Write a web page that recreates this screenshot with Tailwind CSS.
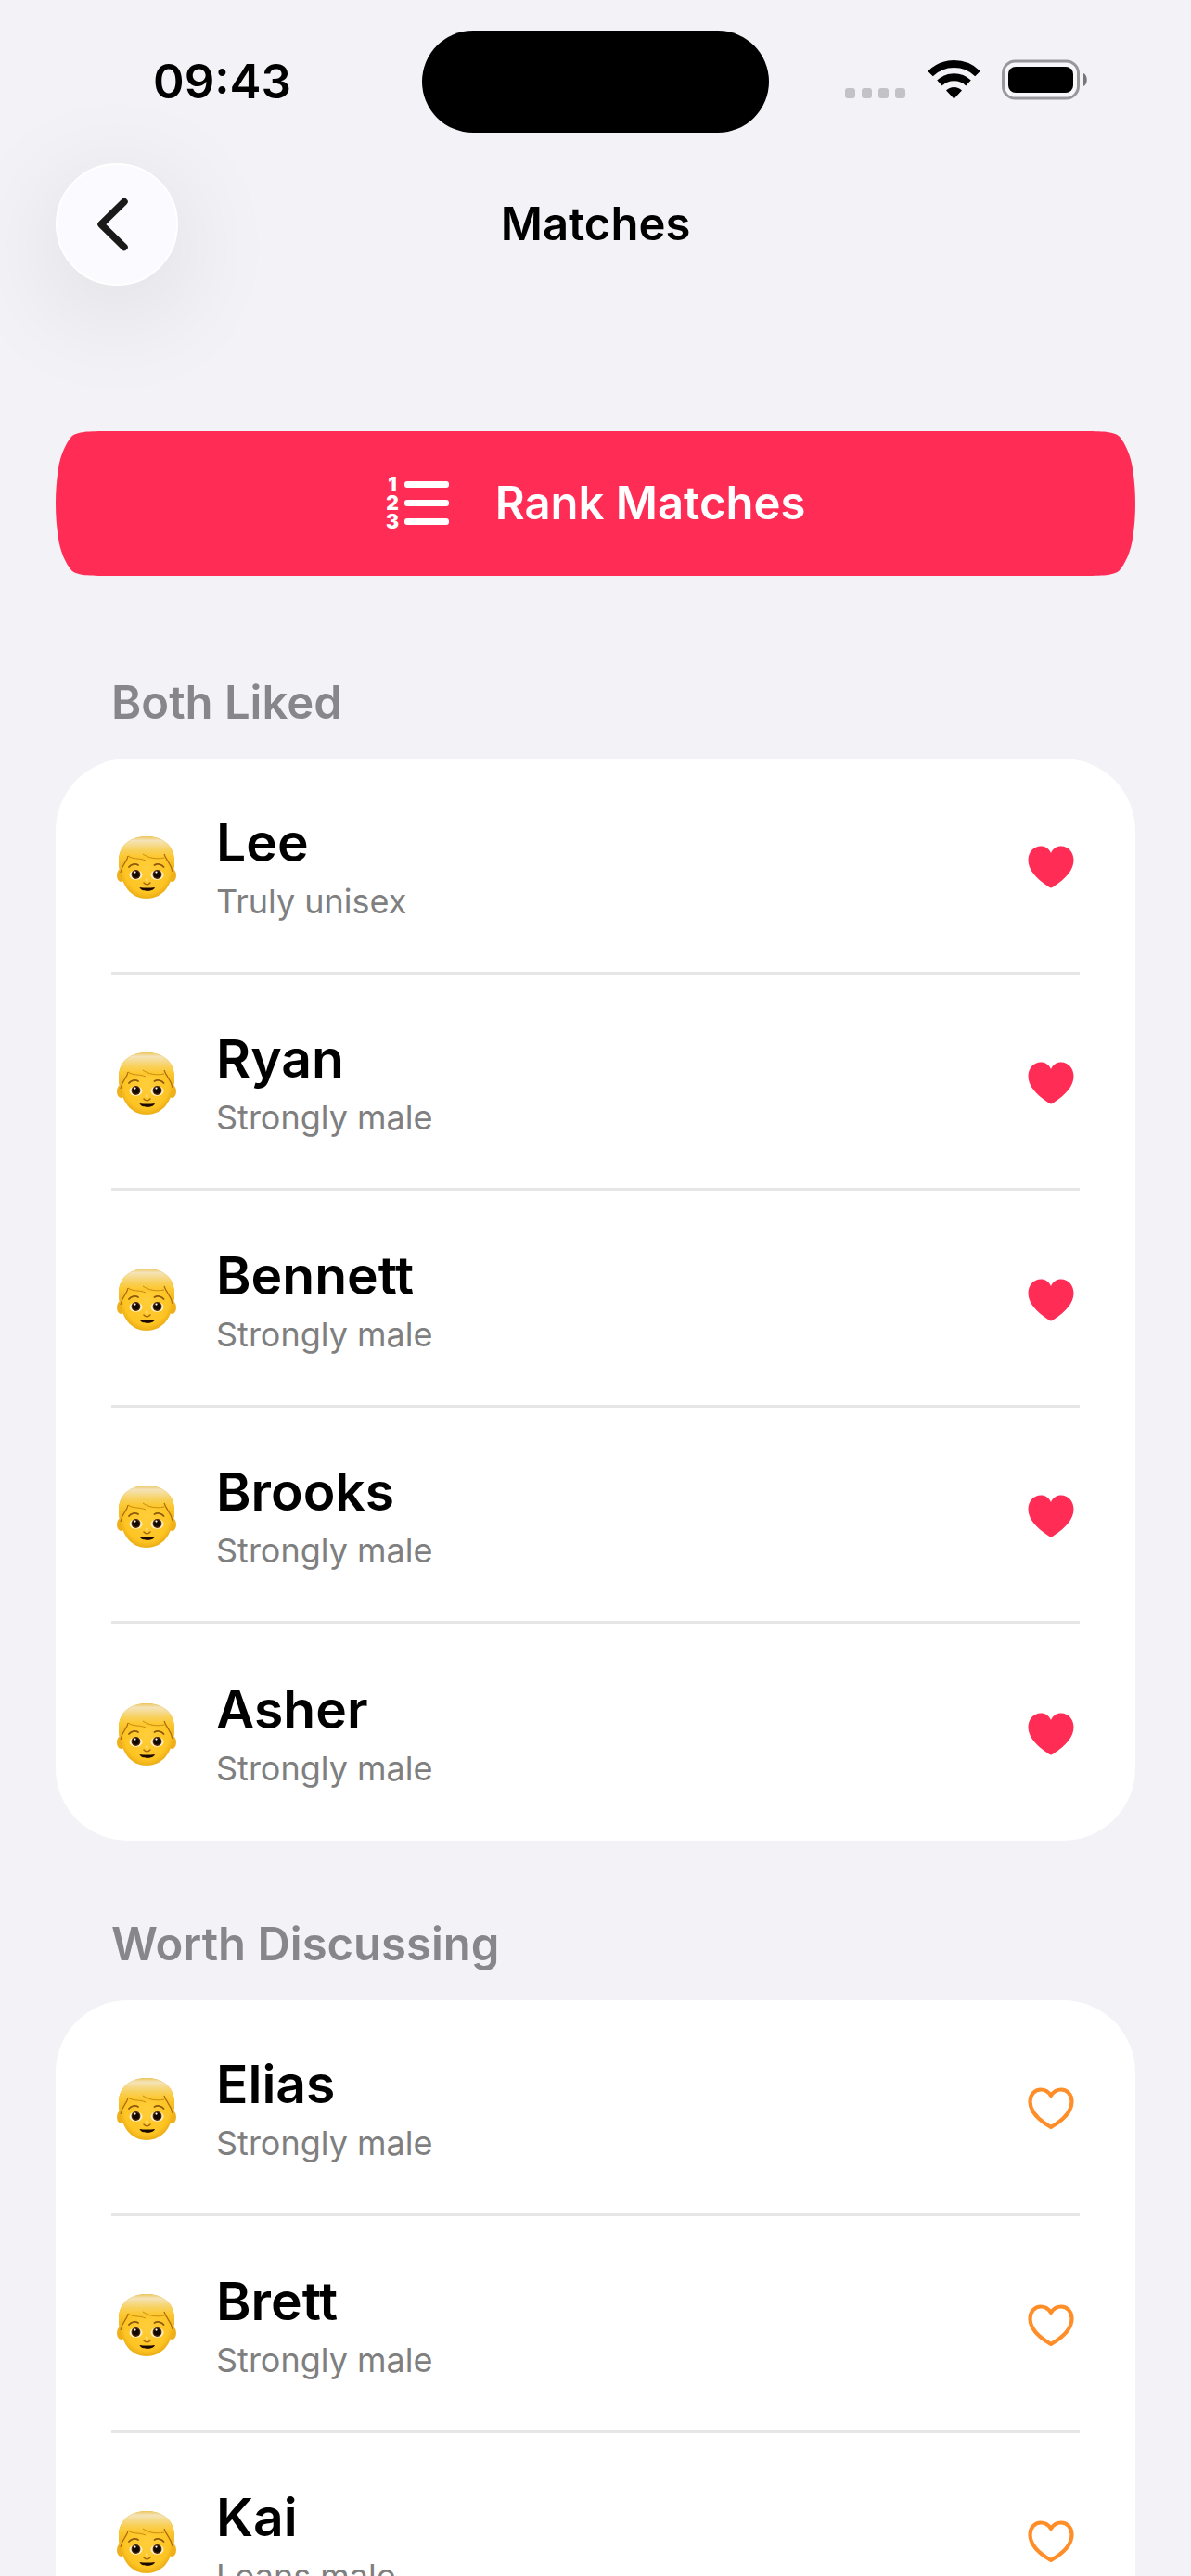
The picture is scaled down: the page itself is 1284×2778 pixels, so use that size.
<!DOCTYPE html>
<html lang="en">
<head>
  <meta charset="UTF-8">
  <meta name="viewport" content="width=device-width, initial-scale=1.0">
  <title>Matches</title>
  <script src="https://cdn.jsdelivr.net/npm/@tailwindcss/browser@4"></script>
</head>
<body class="h-screen overflow-hidden bg-[#f2f2f7] text-black font-['Inter','Liberation_Sans',sans-serif]">

  <!-- Shared icons -->
  <svg class="absolute w-0 h-0" aria-hidden="true">
    <defs>
      <radialGradient id="skin" cx="0.5" cy="0.5" r="0.58">
        <stop offset="0" stop-color="#ffce3a"/>
        <stop offset="0.7" stop-color="#fdc423"/>
        <stop offset="1" stop-color="#dc9a0c"/>
      </radialGradient>
      <linearGradient id="hair" x1="0" y1="0" x2="0" y2="1">
        <stop offset="0" stop-color="#ecc65c"/>
        <stop offset="0.12" stop-color="#f4e3b8"/>
        <stop offset="0.42" stop-color="#f8d05a"/>
        <stop offset="0.6" stop-color="#fdc830"/>
        <stop offset="1" stop-color="#f0b41c"/>
      </linearGradient>
    </defs>
    <symbol id="boy" viewBox="0 0 64 67">
      <ellipse cx="4.500" cy="42" rx="4.500" ry="7" fill="#f0b01c"/>
      <ellipse cx="59.500" cy="42" rx="4.500" ry="7" fill="#f0b01c"/>
      <path d="M2 27C2 9 15 0 32 0s30 9 30 27c0 4-1 8-2 12-2 17-13 28-28 28S7 56 4 39C3 35 2 31 2 27z" fill="url(#skin)"/>
      <path d="M2.500 36C2 32 2 30 2 27 2 9 15 0 32 0s30 9 30 27c0 3 0 5-.5 9-3-4-7-8-10-13-4 1-9 1-13-1 1 1 1 2 2 3-10-1-20 0-27-5-3 6-8 9-11 16z" fill="url(#hair)"/>
      <path d="M12 21c5 4 12 2 19 5M28 19c6 4 14 6 23 4" fill="none" stroke="#c98a12" stroke-width="1"/>
      <path d="M12 21c-1 7-6 8-8 18M51 19c2 7 7 9 9 19" fill="none" stroke="#a9690d" stroke-width="1.200"/>
      <path d="M13 33c2-3 7-4 10-2M40.500 31c3-2 8-1 10 2" fill="none" stroke="#8f5a0c" stroke-width="1.800" stroke-linecap="round"/>
      <ellipse cx="20.500" cy="41.500" rx="7" ry="5.200" fill="#fff0c4"/>
      <ellipse cx="43.500" cy="41.500" rx="7" ry="5.200" fill="#fff0c4"/>
      <circle cx="20.500" cy="41" r="4.900" fill="#4a2608"/>
      <circle cx="43.500" cy="41" r="4.900" fill="#4a2608"/>
      <circle cx="20.500" cy="41" r="3.600" fill="#120802"/>
      <circle cx="43.500" cy="41" r="3.600" fill="#120802"/>
      <circle cx="19.500" cy="38.600" r="1.100" fill="#fff"/>
      <circle cx="42.500" cy="38.600" r="1.100" fill="#fff"/>
      <ellipse cx="32.300" cy="47" rx="1.300" ry="1.800" fill="#ffe08c"/>
      <path d="M29 50c2 2.500 5 2.500 7 0" fill="none" stroke="#a5670d" stroke-width="1.500" stroke-linecap="round"/>
      <path d="M24.500 55c5 .8 11 .8 16.500 0-2 5.200-14.500 5.200-16.500 0z" fill="#1b0a02"/>
    </symbol>
    <symbol id="heart-fill" viewBox="0 0 50 46">
      <path d="M25 45.500c-1 0-2-.8-3-1.500C9 35.500.5 26 .5 15.500.5 7 6.500.5 14 .5c5 0 9 2.500 11 7.500C27 3 31 .5 36 .5c7.500 0 13.500 6.500 13.500 15C49.500 26 41 35.500 28 44c-1 .7-2 1.500-3 1.500z" fill="#ff2d55"/>
    </symbol>
    <symbol id="heart-line" viewBox="0 0 50 46">
      <path d="M25 43C12 35.500 2.500 26 2.500 15.500 2.500 8 7.500 2.500 14 2.500c5 0 8.500 2.500 11 6.500 2.500-4 6-6.500 11-6.500 6.500 0 11.500 5.500 11.500 13C47.500 26 38 35.500 25 43z" fill="none" stroke="#ff8d28" stroke-width="4.200" stroke-linejoin="round"/>
    </symbol>
  </svg>

  <!-- Status bar -->
  <div class="grid grid-cols-3 items-center h-[176px] px-[60px]">
    <div class="pl-[105px] text-[51px] leading-[60px] font-semibold">09:43</div>
    <div class="justify-self-center w-[374px] h-[110px] rounded-full bg-black"></div>
    <div class="flex items-center justify-self-end pr-[51px] pb-1 gap-[23px]">
      <svg class="w-[66px] h-[44px]" viewBox="0 0 66 44" fill="#c3c2c7" aria-hidden="true">
        <rect x="0" y="31" width="11" height="11" rx="3"/>
        <rect x="18" y="31" width="11" height="11" rx="3"/>
        <rect x="36" y="31" width="11" height="11" rx="3"/>
        <rect x="54" y="31" width="11" height="11" rx="3"/>
      </svg>
      <svg class="w-[57px] h-[44px]" viewBox="0 0 57 44" aria-hidden="true">
        <path d="M3 15.500a36.500 36.500 0 0 1 51 0" fill="none" stroke="#000" stroke-width="8"/>
        <path d="M13 25.500a22.500 22.500 0 0 1 31 0" fill="none" stroke="#000" stroke-width="8"/>
        <path d="M28.500 42.500l-8.500-9a12 12 0 0 1 17 0z"/>
      </svg>
      <svg class="w-[93px] h-[44px]" viewBox="0 0 93 44" aria-hidden="true">
        <rect x="1.500" y="2" width="81" height="40" rx="13" fill="#f7f7fa" stroke="#98989c" stroke-width="3"/>
        <rect x="7" y="8" width="70" height="28" rx="8"/>
        <path d="M88 15c5 2 5 12 0 14z" fill="#77777a"/>
      </svg>
    </div>
  </div>

  <!-- Nav bar -->
  <header class="grid grid-cols-3 items-center px-[60px]">
    <button type="button" aria-label="Back" class="flex items-center justify-center w-[132px] h-[132px] rounded-full bg-[#fafaff] border-2 border-white shadow-[0_24px_120px_rgba(0,0,0,0.11)]">
      <svg class="w-[40px] h-[60px] mr-[10px]" viewBox="0 0 40 60" aria-hidden="true">
        <path d="M33 5.500L8 30l25 24.500" fill="none" stroke="#1a1a1a" stroke-width="7.500" stroke-linecap="round" stroke-linejoin="round"/>
      </svg>
    </button>
    <h1 class="text-center text-[49px] leading-[60px] font-semibold">Matches</h1>
  </header>

  <main class="px-[60px] pt-[157px]">
    <!-- Rank button, with end caps on both sides -->
    <button type="button" class="flex w-full h-[156px] text-white">
      <svg class="w-[60px] h-[156px] shrink-0" viewBox="0 0 60 156" aria-hidden="true">
        <path d="M60 0H54C32 0 22 1 17 6 11 13 5 26 3 40 1 52 0 65 0 78s1 26 3 38c2 14 8 27 14 34 5 5 15 6 37 6h6z" fill="#ff2d55"/>
      </svg>
      <span class="flex flex-1 items-center justify-center gap-[50px] h-full bg-[#ff2d55] text-[49px] leading-[60px] font-semibold">
        <svg class="w-[68px] h-[60px] overflow-visible" viewBox="0 0 68 60" fill="#fff" aria-hidden="true">
          <g font-family="Inter, sans-serif" font-size="21" font-weight="900" text-anchor="middle">
            <text x="7" y="17">1</text>
            <text x="7" y="37">2</text>
            <text x="7" y="57">3</text>
          </g>
          <rect x="20" y="6" width="48" height="7" rx="3"/>
          <rect x="20" y="26" width="48" height="7" rx="3"/>
          <rect x="20" y="46" width="48" height="7" rx="3"/>
        </svg>
        Rank Matches
      </span>
      <svg class="w-[60px] h-[156px] shrink-0 -scale-x-100" viewBox="0 0 60 156" aria-hidden="true">
        <path d="M60 0H54C32 0 22 1 17 6 11 13 5 26 3 40 1 52 0 65 0 78s1 26 3 38c2 14 8 27 14 34 5 5 15 6 37 6h6z" fill="#ff2d55"/>
      </svg>
    </button>

    <!-- Both liked -->
    <section class="pt-[107px]">
      <h2 class="px-[60px] pb-[30px] text-[49px] leading-[60px] font-semibold text-[#87868b]">Both Liked</h2>
      <ul class="px-[60px] rounded-[78px] bg-white">
        <li class="flex items-center h-[233px] pt-1 border-b-3 border-[#e6e6e6]">
          <svg class="w-[64px] h-[67px] ml-[6px]"><use href="#boy"/></svg>
          <div class="flex-1 pl-[43px]">
            <h3 class="text-[57px] leading-[70px] font-semibold">Lee</h3>
            <p class="mt-1 text-[36px] leading-[48px] text-[#7f7f7f]">Truly unisex</p>
          </div>
          <svg class="w-[50px] h-[46px] mr-[6px]"><use href="#heart-fill"/></svg>
        </li>
        <li class="flex items-center h-[233px] pt-1 border-b-3 border-[#e6e6e6]">
          <svg class="w-[64px] h-[67px] ml-[6px]"><use href="#boy"/></svg>
          <div class="flex-1 pl-[43px]">
            <h3 class="text-[57px] leading-[70px] font-semibold">Ryan</h3>
            <p class="mt-1 text-[36px] leading-[48px] text-[#7f7f7f]">Strongly male</p>
          </div>
          <svg class="w-[50px] h-[46px] mr-[6px]"><use href="#heart-fill"/></svg>
        </li>
        <li class="flex items-center h-[234px] pt-1 border-b-3 border-[#e6e6e6]">
          <svg class="w-[64px] h-[67px] ml-[6px]"><use href="#boy"/></svg>
          <div class="flex-1 pl-[43px]">
            <h3 class="text-[57px] leading-[70px] font-semibold">Bennett</h3>
            <p class="mt-1 text-[36px] leading-[48px] text-[#7f7f7f]">Strongly male</p>
          </div>
          <svg class="w-[50px] h-[46px] mr-[6px]"><use href="#heart-fill"/></svg>
        </li>
        <li class="flex items-center h-[233px] pt-1 border-b-3 border-[#e6e6e6]">
          <svg class="w-[64px] h-[67px] ml-[6px]"><use href="#boy"/></svg>
          <div class="flex-1 pl-[43px]">
            <h3 class="text-[57px] leading-[70px] font-semibold">Brooks</h3>
            <p class="mt-1 text-[36px] leading-[48px] text-[#7f7f7f]">Strongly male</p>
          </div>
          <svg class="w-[50px] h-[46px] mr-[6px]"><use href="#heart-fill"/></svg>
        </li>
        <li class="flex items-center h-[234px] pt-1">
          <svg class="w-[64px] h-[67px] ml-[6px]"><use href="#boy"/></svg>
          <div class="flex-1 pl-[43px]">
            <h3 class="text-[57px] leading-[70px] font-semibold">Asher</h3>
            <p class="mt-1 text-[36px] leading-[48px] text-[#7f7f7f]">Strongly male</p>
          </div>
          <svg class="w-[50px] h-[46px] mr-[6px]"><use href="#heart-fill"/></svg>
        </li>
      </ul>
    </section>

    <!-- Worth discussing -->
    <section class="pt-[82px]">
      <h2 class="px-[60px] pb-[30px] text-[49px] leading-[60px] font-semibold text-[#87868b]">Worth Discussing</h2>
      <ul class="px-[60px] rounded-t-[78px] bg-white">
        <li class="flex items-center h-[233px] pt-1 border-b-3 border-[#e6e6e6]">
          <svg class="w-[64px] h-[67px] ml-[6px]"><use href="#boy"/></svg>
          <div class="flex-1 pl-[43px]">
            <h3 class="text-[57px] leading-[70px] font-semibold">Elias</h3>
            <p class="mt-1 text-[36px] leading-[48px] text-[#7f7f7f]">Strongly male</p>
          </div>
          <svg class="w-[50px] h-[46px] mr-[6px]"><use href="#heart-line"/></svg>
        </li>
        <li class="flex items-center h-[234px] pt-1 border-b-3 border-[#e6e6e6]">
          <svg class="w-[64px] h-[67px] ml-[6px]"><use href="#boy"/></svg>
          <div class="flex-1 pl-[43px]">
            <h3 class="text-[57px] leading-[70px] font-semibold">Brett</h3>
            <p class="mt-1 text-[36px] leading-[48px] text-[#7f7f7f]">Strongly male</p>
          </div>
          <svg class="w-[50px] h-[46px] mr-[6px]"><use href="#heart-line"/></svg>
        </li>
        <li class="flex items-center h-[233px] pt-1 border-b-3 border-[#e6e6e6]">
          <svg class="w-[64px] h-[67px] ml-[6px]"><use href="#boy"/></svg>
          <div class="flex-1 pl-[43px]">
            <h3 class="text-[57px] leading-[70px] font-semibold">Kai</h3>
            <p class="mt-1 text-[36px] leading-[48px] text-[#7f7f7f]">Leans male</p>
          </div>
          <svg class="w-[50px] h-[46px] mr-[6px]"><use href="#heart-line"/></svg>
        </li>
      </ul>
    </section>
  </main>
</body>
</html>
